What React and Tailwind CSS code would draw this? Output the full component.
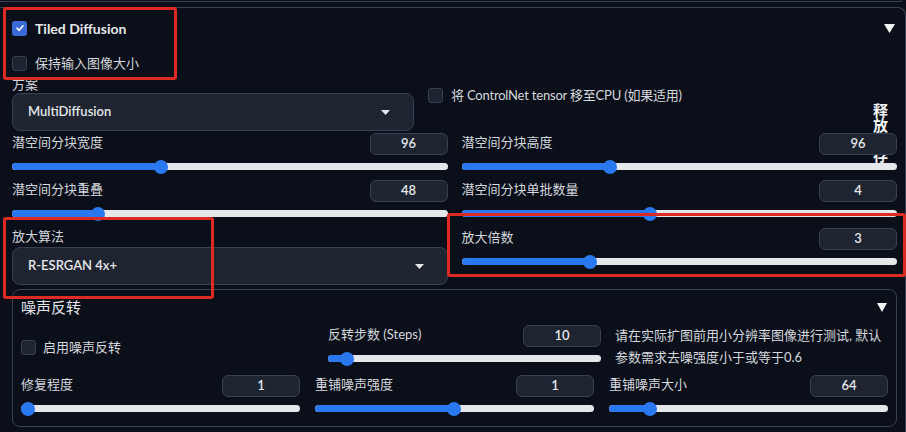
import React from "react";

const FONT = { fontFamily: '"Lato", "Noto Sans CJK SC", "Noto Sans", sans-serif' };

function Checkbox({ checked }) {
  if (checked) {
    return (
      <div className="w-[15px] h-[15px] shrink-0 rounded-[3px] bg-[#3b6ad6] flex items-center justify-center">
        <svg width="10" height="10" viewBox="0 0 10 10">
          <path d="M2 5.2 L4.2 7.3 L8 2.8" fill="none" stroke="white" strokeWidth="1.6" strokeLinecap="round" strokeLinejoin="round" />
        </svg>
      </div>
    );
  }
  return <div className="w-[15px] h-[15px] shrink-0 rounded-[3px] bg-[#1e2430] border border-[#374151]" />;
}

function Tri({ w = 11, h = 9 }) {
  return (
    <svg width={w} height={h} viewBox={`0 0 ${w} ${h}`}>
      <polygon points={`0,0 ${w},0 ${w / 2},${h}`} fill="#f3f4f6" />
    </svg>
  );
}

function Caret() {
  return (
    <svg width="9" height="5" viewBox="0 0 9 5">
      <polygon points="0,0 9,0 4.5,5" fill="#e5e7eb" />
    </svg>
  );
}

function Track({ pct }) {
  return (
    <div className="relative h-[7px] rounded-full bg-[#e5e7eb]">
      <div className="absolute left-0 top-0 h-full rounded-full bg-[#2a78f0]" style={{ width: `${pct}%` }} />
      <div
        className="absolute top-1/2 -translate-y-1/2 w-[14px] h-[14px] rounded-full bg-[#2a78f0]"
        style={{ left: `calc(${pct}% - 7px)` }}
      />
    </div>
  );
}

function NumBox({ v }) {
  return (
    <div className="w-[78px] h-[22px] shrink-0 rounded-[6px] bg-[#1e2430] border border-[#374151] flex items-center justify-center text-[13px] text-[#e5e7eb] font-semibold">
      {v}
    </div>
  );
}

function SliderBlock({ label, value, pct }) {
  return (
    <div>
      <div className="flex justify-between items-start h-[22px]">
        <span className="text-[13px] leading-4 pt-[1px] text-[#d4d7dd] whitespace-nowrap">{label}</span>
        <NumBox v={value} />
      </div>
      <div className="mt-[8px]">
        <Track pct={pct} />
      </div>
    </div>
  );
}

function Dropdown({ text, arrowRight }) {
  return (
    <div className="h-[38px] rounded-[8px] bg-[#1e2430] border border-[#374151] flex items-center justify-between pl-[15px]" style={{ paddingRight: arrowRight }}>
      <span className="text-[13px] font-semibold text-[#e5e7eb]">{text}</span>
      <Caret />
    </div>
  );
}

export default function App() {
  return (
    <div className="w-[906px] h-[432px] overflow-hidden bg-[#0b0f19] relative isolate" style={FONT}>
      <div className="h-[2px] w-[902px] border-b border-r border-[#374151] rounded-br-[6px]" />
      <div className="mt-[5px] ml-[-1px] w-[907px] h-[440px] border-t border-r border-[#374151] rounded-tr-[8px] pl-[13px] pr-[8px] pt-[12px]">
        {/* header */}
        <div className="flex items-center justify-between h-[16px]">
          <div className="flex items-center gap-[8px]">
            <Checkbox checked />
            <span className="text-[14px] font-bold text-[#e5e7eb]">Tiled Diffusion</span>
          </div>
          <div className="mr-[2px]">
            <Tri />
          </div>
        </div>
        <div className="mt-[20px] flex items-center gap-[8px] h-[15px]">
          <Checkbox />
          <span className="text-[13px] text-[#d4d7dd]">保持输入图像大小</span>
        </div>

        {/* row A */}
        <div className="mt-[5px] flex">
          <div className="w-[402px]">
            <div className="text-[13px] leading-4 text-[#d4d7dd]">方案</div>
            <div className="mt-[1px]">
              <Dropdown text="MultiDiffusion" arrowRight="23px" />
            </div>
          </div>
          <div className="ml-[14px] pt-[12px] flex items-center gap-[8px] h-[15px] box-content">
            <Checkbox />
            <span className="text-[13px] tracking-[-0.2px] text-[#d4d7dd] whitespace-nowrap">将 ControlNet tensor 移至CPU (如果适用)</span>
          </div>
        </div>

        {/* sliders */}
        <div className="mt-[2px] grid grid-cols-2 gap-x-[14px] gap-y-[10px]">
          <SliderBlock label="潜空间分块宽度" value="96" pct={34.3} />
          <SliderBlock label="潜空间分块高度" value="96" pct={34.2} />
          <SliderBlock label="潜空间分块重叠" value="48" pct={19.8} />
          <SliderBlock label="潜空间分块单批数量" value="4" pct={43.3} />
        </div>

        {/* row C */}
        <div className="mt-[11px] grid grid-cols-2 gap-x-[14px] items-start">
          <div>
            <div className="text-[13px] leading-4 text-[#d4d7dd]">放大算法</div>
            <div className="mt-[3px]">
              <Dropdown text="R-ESRGAN 4x+" arrowRight="23px" />
            </div>
          </div>
          <SliderBlock label="放大倍数" value="3" pct={29.4} />
        </div>

        {/* inner panel */}
        <div className="mt-[4px] border border-[#374151] rounded-[8px] px-[8px] pt-[7px] pb-[14px]">
          <div className="flex items-center justify-between h-[20px]">
            <span className="text-[15px] text-[#e5e7eb]">噪声反转</span>
            <div className="mr-[1px]">
              <Tri w={10} h={9} />
            </div>
          </div>
          <div className="mt-[8px] flex items-start">
            <div className="w-[293px] pt-[13px] flex items-center gap-[7px]">
              <Checkbox />
              <span className="text-[13px] text-[#d4d7dd]">启用噪声反转</span>
            </div>
            <div className="ml-[14px] w-[273px]">
              <SliderBlock label="反转步数 (Steps)" value="10" pct={7} />
            </div>
            <div className="ml-[14px] w-[273px] mt-[-1px] text-[13px] leading-[22px] text-[#d4d7dd] whitespace-nowrap">
              请在实际扩图前用小分辨率图像进行测试, 默认
              <br />
              参数需求去噪强度小于或等于0.6
            </div>
          </div>
          <div className="mt-[7px] grid grid-cols-3 gap-x-[15px]">
            <SliderBlock label="修复程度" value="1" pct={2.5} />
            <SliderBlock label="重铺噪声强度" value="1" pct={49.8} />
            <SliderBlock label="重铺噪声大小" value="64" pct={14.7} />
          </div>
        </div>
      </div>

      {/* 释放显存 text behind inputs */}
      <div className="absolute left-[873px] top-[103px] w-[16px] -z-10 flex flex-col text-[15px] font-bold text-[#f3f4f6]">
        <div className="h-[15px] leading-[15px] overflow-visible">释</div>
        <div className="h-[15px] leading-[15px] overflow-visible">放</div>
        <div className="h-[15px] leading-[15px] overflow-visible">显</div>
        <div className="h-[15px] leading-[15px] overflow-visible">存</div>
      </div>

      {/* red highlight boxes */}
      <div className="absolute left-[3px] top-[7px] w-[174px] h-[73px] border-[3px] border-[#dd2a22] rounded-[3px]" />
      <div className="absolute left-[3px] top-[217px] w-[211px] h-[82px] border-[3px] border-[#dd2a22] rounded-[3px]" />
      <div className="absolute left-[447px] top-[213px] w-[459px] h-[64px] border-[3px] border-[#dd2a22] rounded-[3px]" />
    </div>
  );
}
